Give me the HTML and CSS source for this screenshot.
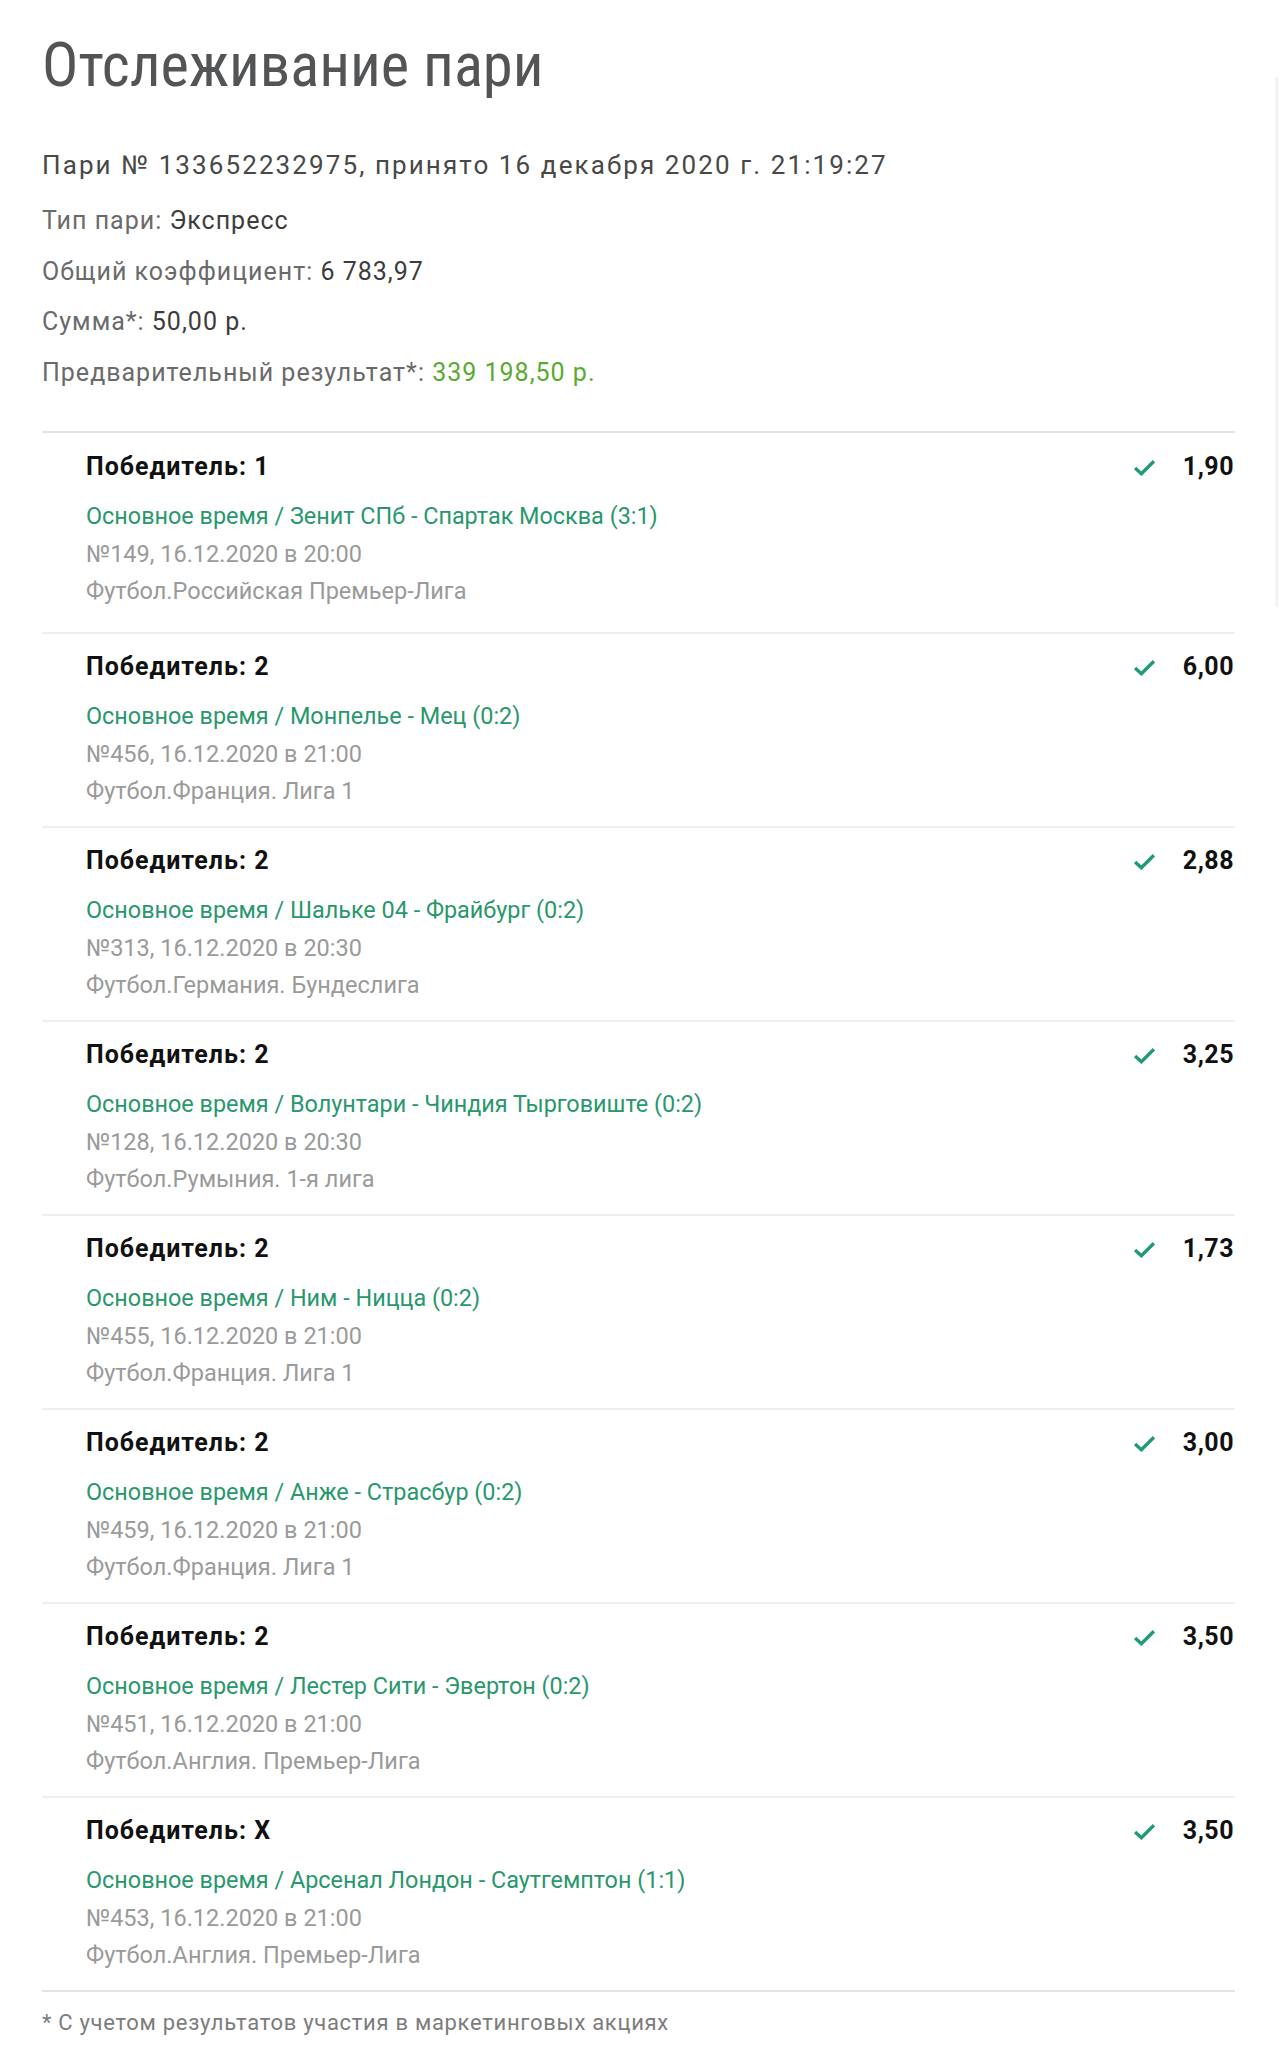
FILE: index.html
```html
<!DOCTYPE html>
<html lang="ru">
<head>
<meta charset="utf-8">
<title>Отслеживание пари</title>
<link rel="stylesheet" href="styles.css">
</head>
<body>
<div class="edge"></div>
<main class="page">
  <h1 class="title">Отслеживание пари</h1>
  <section class="summary">
    <p class="bet-id">Пари № 133652232975, принято 16 декабря 2020 г. 21:19:27</p>
    <p class="info"><span class="label">Тип пари:</span> <span class="value">Экспресс</span></p>
    <p class="info"><span class="label">Общий коэффициент:</span> <span class="value">6 783,97</span></p>
    <p class="info"><span class="label">Сумма*:</span> <span class="value">50,00 р.</span></p>
    <p class="info"><span class="label">Предварительный результат*:</span> <span class="value win">339 198,50 р.</span></p>
  </section>
  <ul class="events">
    <li class="event">
      <div class="event-head"><span class="outcome">Победитель: 1</span><span class="odds-group"><svg class="check" viewBox="0 0 22 16"><polyline points="2,8.5 8,14 20,2"/></svg><span class="odds">1,90</span></span></div>
      <div class="match">Основное время / Зенит СПб - Спартак Москва (3:1)</div>
      <div class="meta">№149, 16.12.2020 в 20:00</div>
      <div class="meta">Футбол.Российская Премьер-Лига</div>
    </li>
    <li class="event">
      <div class="event-head"><span class="outcome">Победитель: 2</span><span class="odds-group"><svg class="check" viewBox="0 0 22 16"><polyline points="2,8.5 8,14 20,2"/></svg><span class="odds">6,00</span></span></div>
      <div class="match">Основное время / Монпелье - Мец (0:2)</div>
      <div class="meta">№456, 16.12.2020 в 21:00</div>
      <div class="meta">Футбол.Франция. Лига 1</div>
    </li>
    <li class="event">
      <div class="event-head"><span class="outcome">Победитель: 2</span><span class="odds-group"><svg class="check" viewBox="0 0 22 16"><polyline points="2,8.5 8,14 20,2"/></svg><span class="odds">2,88</span></span></div>
      <div class="match">Основное время / Шальке 04 - Фрайбург (0:2)</div>
      <div class="meta">№313, 16.12.2020 в 20:30</div>
      <div class="meta">Футбол.Германия. Бундеслига</div>
    </li>
    <li class="event">
      <div class="event-head"><span class="outcome">Победитель: 2</span><span class="odds-group"><svg class="check" viewBox="0 0 22 16"><polyline points="2,8.5 8,14 20,2"/></svg><span class="odds">3,25</span></span></div>
      <div class="match">Основное время / Волунтари - Чиндия Тырговиште (0:2)</div>
      <div class="meta">№128, 16.12.2020 в 20:30</div>
      <div class="meta">Футбол.Румыния. 1-я лига</div>
    </li>
    <li class="event">
      <div class="event-head"><span class="outcome">Победитель: 2</span><span class="odds-group"><svg class="check" viewBox="0 0 22 16"><polyline points="2,8.5 8,14 20,2"/></svg><span class="odds">1,73</span></span></div>
      <div class="match">Основное время / Ним - Ницца (0:2)</div>
      <div class="meta">№455, 16.12.2020 в 21:00</div>
      <div class="meta">Футбол.Франция. Лига 1</div>
    </li>
    <li class="event">
      <div class="event-head"><span class="outcome">Победитель: 2</span><span class="odds-group"><svg class="check" viewBox="0 0 22 16"><polyline points="2,8.5 8,14 20,2"/></svg><span class="odds">3,00</span></span></div>
      <div class="match">Основное время / Анже - Страсбур (0:2)</div>
      <div class="meta">№459, 16.12.2020 в 21:00</div>
      <div class="meta">Футбол.Франция. Лига 1</div>
    </li>
    <li class="event">
      <div class="event-head"><span class="outcome">Победитель: 2</span><span class="odds-group"><svg class="check" viewBox="0 0 22 16"><polyline points="2,8.5 8,14 20,2"/></svg><span class="odds">3,50</span></span></div>
      <div class="match">Основное время / Лестер Сити - Эвертон (0:2)</div>
      <div class="meta">№451, 16.12.2020 в 21:00</div>
      <div class="meta">Футбол.Англия. Премьер-Лига</div>
    </li>
    <li class="event">
      <div class="event-head"><span class="outcome">Победитель: X</span><span class="odds-group"><svg class="check" viewBox="0 0 22 16"><polyline points="2,8.5 8,14 20,2"/></svg><span class="odds">3,50</span></span></div>
      <div class="match">Основное время / Арсенал Лондон - Саутгемптон (1:1)</div>
      <div class="meta">№453, 16.12.2020 в 21:00</div>
      <div class="meta">Футбол.Англия. Премьер-Лига</div>
    </li>
  </ul>
  <p class="footnote">* С учетом результатов участия в маркетинговых акциях</p>
</main>
</body>
</html>
```
FILE: styles.css
```css
html, body {
  margin: 0;
  padding: 0;
  background: #ffffff;
}

body {
  position: relative;
  font-family: Roboto, "Noto Sans", "Liberation Sans", sans-serif;
  color: #444;
}

.edge {
  position: absolute;
  left: 1275px;
  top: 77px;
  width: 3px;
  height: 530px;
  background: linear-gradient(to right, #f8f8f8, #efefef);
}

.page {
  margin-left: 42px;
  width: 1193px;
  padding-top: 31px;
}

.title {
  margin: 0;
  font-family: "Roboto Condensed", Roboto, sans-serif;
  font-size: 60.5px;
  line-height: 70px;
  font-weight: 400;
  color: #525456;
}

.summary {
  margin: 0;
}

.bet-id {
  margin: 44px 0 0;
  font-size: 26px;
  line-height: 40px;
  letter-spacing: 2.1px;
  color: #484848;
}

.info {
  margin: 0;
  font-size: 25px;
  line-height: 50.5px;
  letter-spacing: 1px;
}

.bet-id + .info {
  margin-top: 11px;
}

.label {
  color: #6a6a6a;
}

.value {
  color: #3c3c3c;
}

.value.win {
  color: #5aaa32;
}

.events {
  list-style: none;
  margin: 33px 0 0;
  padding: 0;
  border-top: 2px solid #e3e3e3;
}

.event {
  padding: 15px 1px 15.5px 44px;
  border-bottom: 2px solid #efefef;
}

.event:first-child {
  padding-top: 16px;
  padding-bottom: 21.5px;
}

.event:last-child {
  border-bottom-color: #e3e3e3;
}

.event-head {
  display: flex;
  justify-content: space-between;
  align-items: center;
  height: 36px;
}

.outcome {
  font-size: 25px;
  line-height: 36px;
  font-weight: 700;
  letter-spacing: 1px;
  color: #111;
}

.odds-group {
  display: flex;
  align-items: center;
  gap: 27px;
}

.check {
  width: 23px;
  height: 17px;
  fill: none;
  stroke: #1f9c6f;
  stroke-width: 3.2;
}

.odds {
  font-size: 25px;
  line-height: 36px;
  font-weight: 700;
  letter-spacing: 0.5px;
  color: #111;
}

.match {
  margin-top: 13px;
  font-size: 23.4px;
  line-height: 37.5px;
  color: #29976c;
}

.meta {
  font-size: 23.5px;
  line-height: 37.5px;
  color: #9a9a9a;
}

.footnote {
  margin: 16px 0 0;
  font-size: 22px;
  line-height: 30px;
  letter-spacing: 0.7px;
  color: #7c7c7c;
}
```
